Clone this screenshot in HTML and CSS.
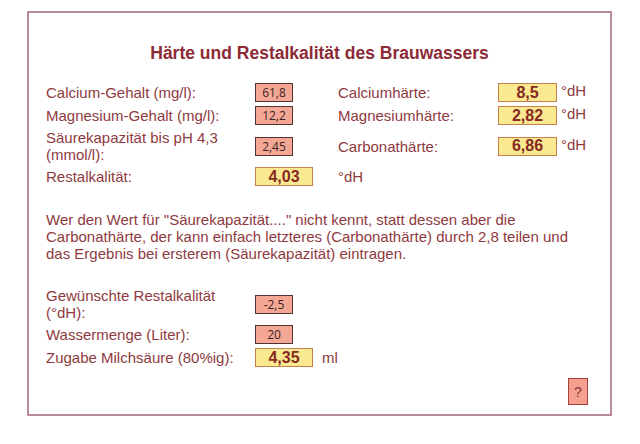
FILE: index.html
```html
<!DOCTYPE html>
<html lang="de">
<head>
    <meta charset="UTF-8">
    <meta name="viewport" content="width=device-width, initial-scale=1.0">
    <title>Restalkalität</title>
    <link rel="stylesheet" href="styles.css">
</head>
<body>

    <div class="rechner">
        <h1>Härte und Restalkalität des Brauwassers</h1>

        <div class="raster oben">
            <span class="label">Calcium-Gehalt (mg/l):</span>
            <span class="eingabe">61,8</span>
            <span class="label">Calciumhärte:</span>
            <span class="ergebnis breit">8,5</span>
            <span class="einheit">°dH</span>

            <span class="label">Magnesium-Gehalt (mg/l):</span>
            <span class="eingabe">12,2</span>
            <span class="label">Magnesiumhärte:</span>
            <span class="ergebnis breit">2,82</span>
            <span class="einheit">°dH</span>

            <span class="label">Säurekapazität bis pH 4,3 (mmol/l):</span>
            <span class="eingabe">2,45</span>
            <span class="label">Carbonathärte:</span>
            <span class="ergebnis breit">6,86</span>
            <span class="einheit">°dH</span>

            <span class="label">Restalkalität:</span>
            <span class="ergebnis">4,03</span>
            <span class="label">°dH</span>
            <span></span>
            <span></span>
        </div>

        <p class="hinweis">Wer den Wert für "Säurekapazität...." nicht kennt, statt dessen aber die Carbonathärte, der kann einfach letzteres (Carbonathärte) durch 2,8 teilen und das Ergebnis bei ersterem (Säurekapazität) eintragen.</p>

        <div class="raster unten">
            <span class="label">Gewünschte Restalkalität (°dH):</span>
            <span class="eingabe">-2,5</span>
            <span></span>

            <span class="label">Wassermenge (Liter):</span>
            <span class="eingabe">20</span>
            <span></span>

            <span class="label">Zugabe Milchsäure (80%ig):</span>
            <span class="ergebnis">4,35</span>
            <span class="label">ml</span>
        </div>

        <div class="fuss">
            <button class="hilfe">?</button>
        </div>
    </div>

</body>
</html>
```

FILE: styles.css
```css
body {
    font-family: "Liberation Sans", Arial, sans-serif;
    background-color: #fff;
    margin: 0;
    padding: 0;
}

.rechner {
    margin: 11px 0 0 27px;
    width: 564px;
    height: 401px;
    border: 2px solid #b88c98;
    padding: 0 0 0 17px;
    display: flex;
    flex-direction: column;
}

h1 {
    color: #8c2a36;
    font-size: 17.5px;
    line-height: 20px;
    margin: 30px 0 20px -17px;
    text-align: center;
}

.raster {
    display: grid;
    row-gap: 4px;
    align-items: center;
}

.oben {
    grid-template-columns: 209px 83px 160px 63px auto;
}

.unten {
    grid-template-columns: 209px 67px auto;
}

.label,
.einheit {
    font-size: 15px;
    line-height: 17px;
    color: #8e3a40;
    padding-right: 10px;
}

/* unit sits a little higher than the value box */
.einheit {
    margin-top: -4px;
}

.eingabe,
.ergebnis {
    box-sizing: border-box;
    height: 19px;
    display: flex;
    align-items: center;
    justify-content: center;
}

.eingabe {
    width: 38px;
    background-color: #f5a795;
    border: 1px solid #4e3430;
    font-family: "Open Sans", sans-serif;
    font-size: 12px;
    color: #3a2424;
}

.ergebnis {
    width: 58px;
    background-color: #fbe991;
    border: 1px solid #c2804c;
    font-size: 16px;
    font-weight: bold;
    color: #862a22;
}

.ergebnis.breit {
    width: 59px;
}

.hinweis {
    width: 540px;
    font-size: 15px;
    line-height: 17px;
    color: #8e3a40;
    margin: 25px 0 25px;
}

.fuss {
    display: flex;
    justify-content: flex-end;
    padding-right: 22px;
    margin-top: 11px;
}

.hilfe {
    width: 20px;
    height: 27px;
    padding: 0;
    background-color: #f5a08e;
    border: 1px solid #a8403e;
    border-radius: 0;
    color: #8e3a40;
    font-family: "Liberation Sans", Arial, sans-serif;
    font-size: 14px;
    cursor: pointer;
}
```
